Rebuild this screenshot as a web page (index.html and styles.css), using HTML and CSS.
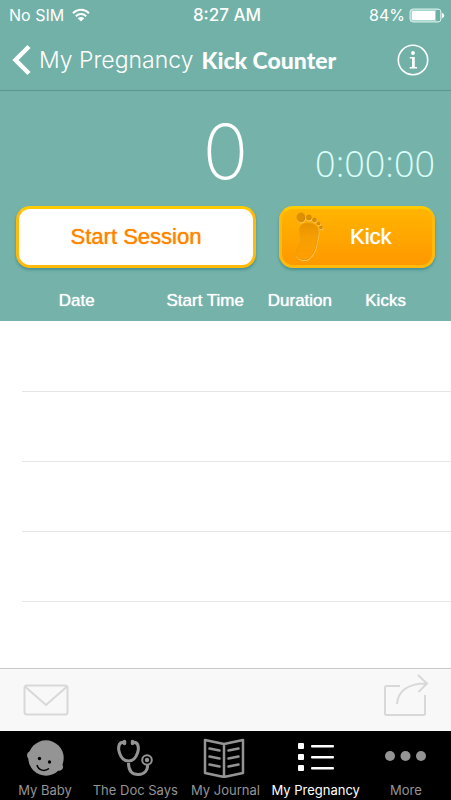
FILE: index.html
```html
<!DOCTYPE html>
<html lang="en">
<head>
<meta charset="utf-8">
<meta name="viewport" content="width=device-width, initial-scale=1">
<title>Kick Counter</title>
<link rel="stylesheet" href="styles.css">
</head>
<body>
<div class="app">
  <header class="top">
    <div class="status">
      <div class="status-left">
        <span>No SIM</span>
        <svg width="18" height="14" viewBox="0 0 18 14" fill="none" stroke="#fff" stroke-width="2">
          <path d="M1 5.2C5.6.7 12.400.7 17 5.200M3.800 8.200c3-2.900 7.400-2.900 10.400 0"/>
          <path d="M9 13.500 5.700 10.300c1.900-1.700 4.700-1.700 6.600 0z" fill="#fff" stroke="none"/>
        </svg>
      </div>
      <div class="status-time">8:27 AM</div>
      <div class="status-right">
        <span>84%</span>
        <svg width="36" height="15" viewBox="0 0 36 15">
          <rect x="1" y="1" width="31" height="13" rx="3" fill="#a9d6ce" stroke="#d5eeea"/>
          <rect x="27" y="2" width="4" height="11" fill="#6fb0a6"/>
          <rect x="3" y="3" width="23" height="9" rx="1" fill="#fff"/>
          <path d="M33 5c3 .5 3 4.500 0 5z" fill="#fff"/>
        </svg>
      </div>
    </div>
    <nav class="navbar">
      <a class="back" href="#pregnancy">
        <svg width="19" height="32" viewBox="0 0 19 32" fill="none" stroke="#fff" stroke-width="4.500"><path d="M17 2.500 3.500 16 17 29.500"/></svg>
        <span>My Pregnancy</span>
      </a>
      <h1>Kick Counter</h1>
      <button class="info" type="button" aria-label="Information">
        <svg width="32" height="32" viewBox="0 0 32 32">
          <circle cx="16" cy="16" r="14.700" fill="none" stroke="#fff" stroke-width="1.600"/>
          <circle cx="16" cy="9" r="1.900" fill="#fff"/>
          <path d="M12.800 13h5v10h2.300v1.500h-7.400V23h2.300v-8.500h-2.200z" fill="#fff"/>
        </svg>
      </button>
    </nav>
  </header>

  <main>
    <section class="counter">
      <div class="readout">
        <output class="count">0</output>
        <time class="timer">0:00:00</time>
      </div>
      <div class="actions">
        <button class="btn btn-start" type="button">Start Session</button>
        <button class="btn btn-kick" type="button">
          <svg width="30" height="50" viewBox="0 0 30 50">
            <defs>
              <linearGradient id="sole" x1="0" y1="0" x2="0" y2="1"><stop offset="0" stop-color="#e69300"/><stop offset=".4" stop-color="#f79f00"/><stop offset="1" stop-color="#ff9d03"/></linearGradient>
            </defs>
            <g stroke="#ffd27a" transform="translate(.4 .9)" fill="none">
              <path d="M7.500 13C12 9.500 20 10.500 23 15c3 5 .5 10-.5 16-1 8-5 15.500-11 16.500-5 .5-10-2-9.500-6C3 36 8 33 6.500 26 5 20 4.500 16 7.500 13z"/>
              <ellipse cx="7" cy="5.500" rx="4" ry="4.500"/><circle cx="15" cy="5.500" r="2.500"/><circle cx="20.500" cy="8" r="2"/><circle cx="24.500" cy="11.500" r="1.600"/><circle cx="27" cy="15.500" r="1.400"/>
            </g>
            <path fill="url(#sole)" stroke="#e89700" stroke-width=".7" d="M7.500 13C12 9.500 20 10.500 23 15c3 5 .5 10-.5 16-1 8-5 15.500-11 16.500-5 .5-10-2-9.500-6C3 36 8 33 6.500 26 5 20 4.500 16 7.500 13z"/>
            <g fill="#dc9000" stroke="#c98000" stroke-width=".6"><ellipse cx="7" cy="5.500" rx="4" ry="4.500"/><circle cx="15" cy="5.500" r="2.500"/><circle cx="20.500" cy="8" r="2"/><circle cx="24.500" cy="11.500" r="1.600"/><circle cx="27" cy="15.500" r="1.400"/></g>
          </svg>
          <span>Kick</span>
        </button>
      </div>
    </section>

    <table class="sessions">
      <colgroup><col class="c-date"><col class="c-start"><col class="c-duration"><col class="c-kicks"><col></colgroup>
      <thead><tr><th scope="col">Date</th><th scope="col">Start Time</th><th scope="col">Duration</th><th scope="col">Kicks</th><td></td></tr></thead>
      <tbody>
        <tr><td colspan="5"></td></tr>
        <tr><td colspan="5"></td></tr>
        <tr><td colspan="5"></td></tr>
        <tr><td colspan="5"></td></tr>
        <tr><td colspan="5"></td></tr>
      </tbody>
    </table>
  </main>

  <div class="toolbar">
    <button type="button" aria-label="Email">
      <svg width="46" height="32" viewBox="0 0 46 32" fill="none" stroke="#d8d8d8" stroke-width="2"><rect x="1.500" y="1.500" width="43" height="29" rx="2.500"/><path d="m2.500 3 20.500 18L43.500 3"/></svg>
    </button>
    <button type="button" aria-label="Share">
      <svg width="46" height="44" viewBox="0 0 46 44" fill="none" stroke="#d8d8d8" stroke-width="2"><path d="M17 12H3.500Q2 12 2 13.500v26Q2 41 3.500 41h37q1.500 0 1.500-1.500V21"/><path d="M14 30C15 17 25 9.500 43 9.500M35 1l9 8.500-8.500 8.500"/></svg>
    </button>
  </div>

  <nav class="tabs">
    <a href="#baby">
      <svg width="38" height="38" viewBox="0 0 38 38"><g fill="#949494"><circle cx="20" cy="19" r="17.700"/><path d="M4 12.500C0 13 0 19.500 4.500 21zM35.500 25c3 1.500 1.500 8-3.500 6.500z"/></g><circle cx="13.500" cy="19.500" r="1.700"/><circle cx="23.500" cy="23" r="1.700"/><path d="M11 26c1.500 5.500 7.500 7 12 3.500" fill="none" stroke="#000" stroke-width="1.500"/></svg>
      <span>My Baby</span>
    </a>
    <a href="#doc">
      <svg width="38" height="38" viewBox="0 0 38 38" fill="none" stroke="#949494" stroke-width="3"><path d="M8 3.500C3 2.500 1.500 8 3.500 14c1.800 5.500 4.500 8 9 8s7.200-2.500 9-8c2-6 .5-11.500-4.500-10.500"/><path d="M12.500 24c0 8 4 11.500 10 11.500S32 31 31.500 26"/><circle cx="31" cy="21" r="4.800" stroke-width="2"/><circle cx="31" cy="21" r="2.200" fill="#949494" stroke="none"/><path d="M8.500 2.500v2M16.500 2.500v2" stroke-width="3.500" stroke-linecap="round"/></svg>
      <span>The Doc Says</span>
    </a>
    <a href="#journal">
      <svg width="46" height="40" viewBox="0 0 46 40" fill="none" stroke="#949494" stroke-width="2.500" stroke-linejoin="round"><path d="M22 6 3 2v33l19 4 19-4V2zM22 6v33"/><path d="m7.500 10.500 10 2m-10 6 10 2m-10 6 10 2M36.500 10.500l-10 2m10 6-10 2m10 6-10 2" stroke-width="2.500" stroke-linecap="round"/></svg>
      <span>My Journal</span>
    </a>
    <a href="#pregnancy" class="active" aria-current="page">
      <svg width="38" height="32" viewBox="0 0 38 32" fill="#fff"><rect x="1" y="1" width="6" height="6" rx="1"/><rect x="1" y="12" width="6" height="6" rx="1"/><rect x="1" y="23" width="6" height="6" rx="1"/><rect x="14" y="3" width="23" height="2.500" rx="1"/><rect x="14" y="14" width="23" height="2.500" rx="1"/><rect x="14" y="25" width="23" height="2.500" rx="1"/></svg>
      <span>My Pregnancy</span>
    </a>
    <a href="#more">
      <svg width="42" height="38" viewBox="0 0 42 38" fill="#949494"><circle cx="5" cy="17" r="5"/><circle cx="20.500" cy="17" r="5"/><circle cx="36" cy="17" r="5"/></svg>
      <span>More</span>
    </a>
  </nav>
</div>
</body>
</html>
```
FILE: styles.css
```css
* { box-sizing: border-box; }

body {
  margin: 0;
  background: #fff;
  color: #fff;
  font-family: Inter, "Liberation Sans", sans-serif;
}

button {
  margin: 0;
  padding: 0;
  border: 0;
  background: none;
  color: inherit;
  font: inherit;
  cursor: pointer;
}

a { color: inherit; text-decoration: none; }
svg { display: block; flex: none; }

.app {
  display: flex;
  flex-direction: column;
  min-height: 100vh;
}

main { flex: 1; }

.top {
  background: #71b1a7;
  border-bottom: 1px solid #5b978d;
}

.status {
  display: grid;
  grid-template-columns: 1fr auto 1fr;
  align-items: center;
  height: 30px;
  padding: 0 6px 0 9px;
  font-size: 16px;
}

.status-left, .status-right {
  display: flex;
  align-items: center;
  gap: 8px;
}

.status-right { justify-content: flex-end; gap: 4px; }
.status-time { font-size: 17px; font-weight: 500; }

.navbar {
  display: flex;
  align-items: center;
  height: 60px;
  padding: 0 22px 0 12px;
}

.back {
  display: flex;
  align-items: center;
  gap: 8px;
  font-size: 23px;
  font-weight: 300;
  white-space: nowrap;
}

.navbar h1 {
  margin: 0 0 0 8px;
  font-family: Lato, sans-serif;
  font-size: 23px;
  font-weight: 900;
  white-space: nowrap;
}

.info { margin-left: auto; }

.counter {
  padding: 0 16px;
  background: #75b3aa;
}

.readout {
  display: grid;
  grid-template-columns: 1fr auto 1fr;
  align-items: end;
  height: 115px;
}

.count {
  grid-column: 2;
  font-size: 76px;
  font-weight: 200;
  line-height: 120px;
}

.timer {
  justify-self: end;
  color: #dcfffa;
  font-family: "Open Sans", sans-serif;
  font-size: 36px;
  font-weight: 300;
  line-height: 94px;
}

.actions {
  display: grid;
  grid-template-columns: 240fr 156fr;
  gap: 23px;
}

.btn {
  height: 62px;
  border: 3px solid #ffba0c;
  border-top-color: #ffca00;
  border-radius: 14px;
  box-shadow: 0 2px 3px #498f93;
  font-family: "Liberation Sans", Arial, sans-serif;
  font-size: 22px;
  text-shadow: 0 0 1px currentColor;
}

.btn-start {
  background: #fff;
  color: #ff8500;
}

.btn-kick {
  display: flex;
  align-items: center;
  gap: 26px;
  padding: 0 12px;
  background: linear-gradient(#ffb400, #ff9800);
}

.sessions {
  width: 100%;
  border-collapse: collapse;
  table-layout: fixed;
  font-family: "Liberation Sans", Arial, sans-serif;
  font-size: 17px;
}

.c-date { width: 34%; }
.c-start { width: 23%; }
.c-duration { width: 19%; }
.c-kicks { width: 19%; }

.sessions thead { background: #75b3aa; }

.sessions th {
  height: 53px;
  padding: 12px 0 0;
  font-weight: 400;
  text-shadow: 0 0 1px currentColor;
}

.sessions tbody td {
  height: 70px;
  padding: 0;
}

.sessions tbody tr + tr td {
  background: linear-gradient(#e6e6e6, #e6e6e6) 22px 0 / 100% 1px no-repeat;
}

.sessions tbody tr:last-child td { height: 60px; }

.toolbar {
  display: flex;
  justify-content: space-between;
  align-items: center;
  height: 63px;
  padding: 0 22px 0 23px;
  background: #f8f8f8;
  border-top: 1px solid #c6c6c6;
}

.toolbar button:last-child { padding-bottom: 8px; }

.tabs {
  display: grid;
  grid-template-columns: repeat(5, 1fr);
  height: 69px;
  padding-bottom: 1px;
  background: #000;
  color: #949494;
  font-size: 13px;
}

.tabs a {
  display: grid;
  grid-template-rows: 46px 18px;
  align-items: center;
  justify-items: center;
  align-content: end;
  line-height: 18px;
  white-space: nowrap;
}

.tabs .active { color: #fff; }
```
